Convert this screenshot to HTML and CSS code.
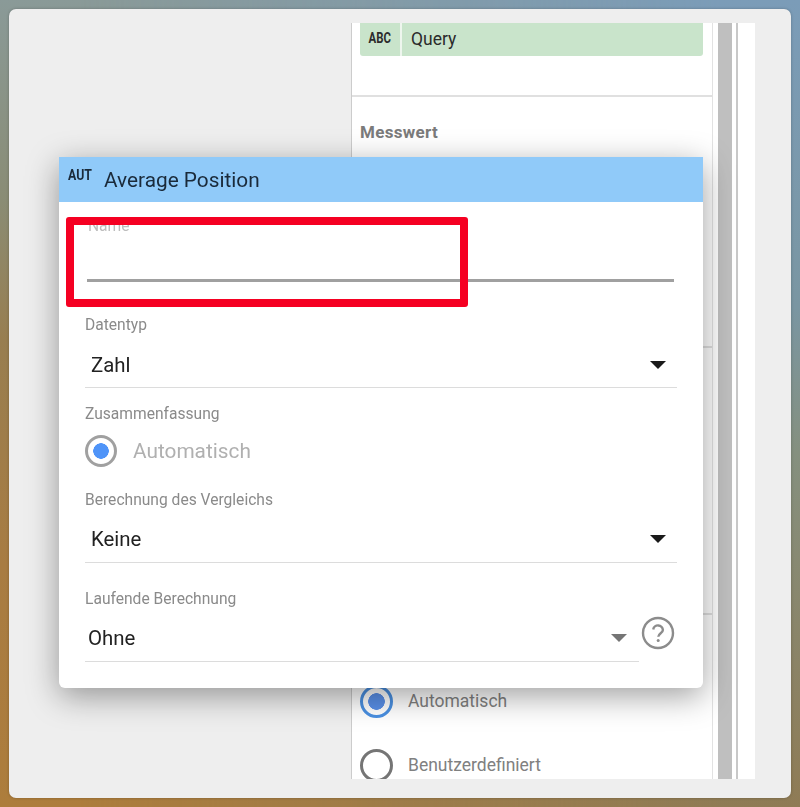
FILE: index.html
```html
<!DOCTYPE html>
<html lang="de">
<head>
<meta charset="utf-8">
<title>Average Position</title>
<link rel="stylesheet" href="styles.css">
</head>
<body>
<div class="window">
  <div class="stage">
    <aside class="panel">
      <section class="sec sec-dim">
        <div class="chip"><span class="chip-icon"><span class="squeeze">ABC</span></span><span class="chip-text">Query</span></div>
      </section>
      <section class="sec sec-metric"><h3 class="sec-title">Messwert</h3></section>
      <section class="sec sec-mid"></section>
      <section class="sec sec-radios">
        <div class="opt"><span class="opt-radio opt-on"></span><span class="opt-label">Automatisch</span></div>
        <div class="opt"><span class="opt-radio"></span><span class="opt-label">Benutzerdefiniert</span></div>
      </section>
    </aside>
    <div class="rail"><div class="rail-bar"></div><div class="rail-line"></div></div>

    <div class="dialog">
      <header class="dlg-head"><span class="dlg-type"><span class="squeeze-soft">AUT</span></span><span class="dlg-title">Average Position</span></header>
      <div class="dlg-body">
        <div class="name-field"><span class="name-label">Name</span></div>
        <div class="label label-a">Datentyp</div>
        <div class="select"><span>Zahl</span><i class="caret"></i></div>
        <div class="label label-b">Zusammenfassung</div>
        <div class="radio-row"><span class="radio"></span><span class="radio-text">Automatisch</span></div>
        <div class="label label-c">Berechnung des Vergleichs</div>
        <div class="select select-b"><span>Keine</span><i class="caret"></i></div>
        <div class="label label-d">Laufende Berechnung</div>
        <div class="last-row">
          <div class="select select-c"><span>Ohne</span><i class="caret caret-soft"></i></div>
          <svg class="help" width="34" height="34" viewBox="0 0 34 34" aria-hidden="true">
            <circle cx="17" cy="17" r="15" fill="none" stroke="#8c8c8c" stroke-width="2.4"/>
            <path d="M12.2 13.4a4.9 4.9 0 0 1 9.7.6c0 3.1-4.6 3.4-4.6 6.8" fill="none" stroke="#8c8c8c" stroke-width="2.4"/>
            <circle cx="17.2" cy="24.4" r="1.5" fill="#8c8c8c"/>
          </svg>
        </div>
      </div>
    </div>
    <div class="highlight"></div>
  </div>
</div>
</body>
</html>
```
FILE: styles.css
```css
* { box-sizing: border-box; }
html, body { height: 100%; }
body {
  position: relative;
  margin: 0;
  padding: 9px;
  font-family: Roboto, "Liberation Sans", sans-serif;
  background: linear-gradient(180deg, #8a9a98 0%, #8a8c74 25%, #987e50 42%, #a87c42 70%, #ad7d3c 100%);
}
body::before {
  content: "";
  position: absolute;
  inset: 0;
  background: linear-gradient(180deg, #7b9cb8 0%, #7a96a2 38%, #85907f 56%, #8f7b55 100%);
  -webkit-mask-image: linear-gradient(90deg, transparent 10%, #000 90%);
  mask-image: linear-gradient(90deg, transparent 10%, #000 90%);
}
.window {
  position: relative;
  width: 782px;
  height: 789px;
  padding: 14px 36px 19px 0;
  background: #eeeeee;
  border-radius: 7px;
  box-shadow: 0 0 3px rgba(0,0,0,.25);
}
.stage {
  position: relative;
  display: flex;
  justify-content: flex-end;
  height: 756px;
  overflow: hidden;
  filter: blur(.35px);
}
.panel {
  width: 362px;
  height: 756px;
  overflow: hidden;
  background: #fff;
  border-left: 1px solid #cccccc;
  border-right: 1px solid #e2e2e2;
}
.sec { border-bottom: 2px solid #e0e0e0; }
.sec-dim { height: 74px; padding: 0 9px 0 8px; }
.chip {
  display: flex;
  height: 33px;
  background: #c9e4cb;
  border-radius: 0 0 3px 3px;
}
.chip-icon {
  width: 42px;
  border-right: 2px solid #eef6ee;
  font-size: 15px;
  font-weight: 700;
  line-height: 31px;
  text-align: center;
  color: #2c2c2c;
}
.squeeze { display: inline-block; transform: scaleX(.76); }
.squeeze-soft { display: inline-block; transform: scaleX(.88); transform-origin: left center; }
.chip-text {
  padding-left: 9px;
  font-size: 17.5px;
  line-height: 32px;
  color: #2b2b2b;
}
.sec-metric { height: 251px; padding-top: 25px; }
.sec-title {
  margin: 0;
  padding-left: 8px;
  font-size: 17px;
  letter-spacing: .3px;
  line-height: 20px;
  font-weight: 700;
  color: #7b7b7b;
}
.sec-mid { height: 267px; }
.sec-radios { border-bottom: 0; padding: 70px 0 0 8px; }
.opt { display: flex; align-items: center; gap: 15px; height: 32px; margin-bottom: 32px; }
.opt-radio {
  flex: none;
  width: 33px;
  height: 33px;
  border: 3px solid #757575;
  border-radius: 50%;
  background: #fff;
}
.opt-on {
  border: 3.5px solid #4a90e2;
  background: radial-gradient(circle, #5a90e8 0 8px, #fff 8.6px);
}
.opt-label { font-size: 17.5px; color: #808080; }
.rail {
  display: flex;
  width: 42px;
  height: 756px;
  padding-left: 5px;
  background: #fff;
}
.rail-bar { width: 14px; background: #bfbfbf; }
.rail-line { width: 2px; margin-left: 4px; background: #c8c8c8; }

.dialog {
  position: absolute;
  left: 50px;
  top: 134px;
  width: 644px;
  height: 531px;
  background: #fff;
  border-radius: 0 0 6px 6px;
  box-shadow: 0 8px 32px rgba(0,0,0,.38);
}
.dlg-head {
  display: flex;
  height: 45px;
  background: #90caf9;
  color: #1a2a3a;
}
.dlg-type {
  width: 45px;
  padding: 10px 0 0 9px;
  font-size: 14px;
  line-height: 16px;
  font-weight: 700;
}
.dlg-title { font-size: 20.8px; line-height: 46px; }
.dlg-body { padding: 0 26px; }
.name-field {
  height: 64px;
  margin: 16px 3px 0 2px;
  border-bottom: 3px solid #a0a0a0;
}
.name-label { display: block; padding-left: 1px; font-size: 15.6px; line-height: 16px; color: #bdbdbd; }
.label { font-size: 15.6px; line-height: 16px; color: #8a8a8a; }
.label-a { margin-top: 35px; }
.label-b { margin-top: 18px; margin-bottom: -1px; }
.label-c { margin-top: 24px; margin-bottom: -1px; }
.label-d { margin-top: 28px; margin-bottom: -1px; }
.select {
  display: flex;
  align-items: center;
  justify-content: space-between;
  height: 45px;
  margin-top: 10px;
  padding: 0 11px 1px 6px;
  border-bottom: 1px solid #dcdcdc;
  font-size: 20.4px;
  color: #222;
}
.select-b { margin-top: 11px; padding-bottom: 2px; }
.caret {
  width: 0;
  height: 0;
  border-left: 8.5px solid transparent;
  border-right: 8.5px solid transparent;
  border-top: 8px solid #1a1a1a;
}
.caret-soft { border-top-color: #757575; }
.radio-row { display: flex; align-items: center; gap: 16px; height: 34px; margin-top: 13px; }
.radio {
  flex: none;
  width: 32px;
  height: 32px;
  border: 3.5px solid #a0a0a0;
  border-radius: 50%;
  background: radial-gradient(circle, #4f94f8 0 7.5px, #fff 8px);
}
.radio-text { font-size: 20.8px; color: #b0b0b0; }
.last-row { display: flex; align-items: flex-start; }
.select-c { width: 554px; height: 46px; padding-left: 3px; padding-right: 12px; margin-top: 10px; }
.help { flex: none; margin: 10px 0 0 1.5px; }
.highlight {
  position: absolute;
  left: 56.5px;
  top: 194px;
  width: 402px;
  height: 90px;
  border: 8px solid #f50022;
  border-radius: 3px;
}
```
